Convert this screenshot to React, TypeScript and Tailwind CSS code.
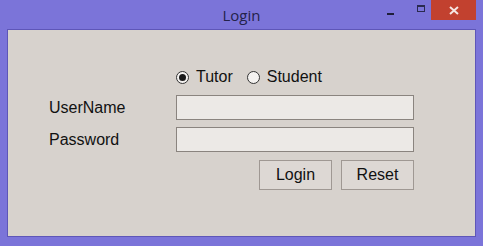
import React from "react";

function Radio({ checked, label }: { checked?: boolean; label: string }) {
  return (
    <label className="flex items-center gap-[7px]">
      <span className="w-[13px] h-[13px] rounded-full border border-[#333] bg-[#f4f2f0] flex items-center justify-center">
        {checked && <span className="w-[7px] h-[7px] rounded-full bg-[#1a1a1a]" />}
      </span>
      <span>{label}</span>
    </label>
  );
}

export default function App() {
  const font = { fontFamily: '"Liberation Sans", Arial, sans-serif' };
  return (
    <div className="w-[483px] h-[246px] bg-[#7b74d9] flex flex-col" style={font}>
      {/* title bar */}
      <div className="relative h-[29px] shrink-0 flex items-center justify-center">
        <span className="text-[15px] text-[#23224a] mt-[2px]" style={{ fontFamily: '"Open Sans", sans-serif' }}>Login</span>
        <div className="absolute right-[7px] top-0 flex items-start">
          <div className="w-[20px] h-[20px] flex items-center justify-center mr-[11px]">
            <span className="w-[7px] h-[2px] bg-[#1f1f3a] mt-[7px]" />
          </div>
          <div className="w-[20px] h-[20px] flex items-center justify-center">
            <span className="w-[8px] h-[7px] border border-[#2a2a50] border-t-2 -mt-[3px]" />
          </div>
          <div className="w-[45px] h-[20px] bg-[#c2412f] flex items-center justify-center">
            <svg width="10" height="9" viewBox="0 0 10 9">
              <path d="M1 1 L9 8 M9 1 L1 8" stroke="#f5e6e2" strokeWidth="2" />
            </svg>
          </div>
        </div>
      </div>
      {/* client */}
      <div className="mx-[7px] mb-[9px] flex-1 border border-[#5e56b8] bg-[#d7d2cd] text-[16px] text-[#111]">
        <div className="pl-[168px] pt-[35px] flex gap-[14px]">
          <Radio checked label="Tutor" />
          <Radio label="Student" />
        </div>
        <div className="mt-[6px] flex flex-col gap-[7px]">
          <div className="flex items-center">
            <span className="w-[168px] pl-[41px]">UserName</span>
            <div className="w-[238px] h-[25px] border border-[#8a847f] bg-[#ece9e6]" />
          </div>
          <div className="flex items-center">
            <span className="w-[168px] pl-[41px]">Password</span>
            <div className="w-[238px] h-[25px] border border-[#8a847f] bg-[#ece9e6]" />
          </div>
        </div>
        <div className="mt-[8px] pl-[251px] flex gap-[9px]">
          <button className="w-[73px] h-[30px] border border-[#9f9893] bg-[#ddd8d4]">Login</button>
          <button className="w-[73px] h-[30px] border border-[#9f9893] bg-[#ddd8d4]">Reset</button>
        </div>
      </div>
    </div>
  );
}
